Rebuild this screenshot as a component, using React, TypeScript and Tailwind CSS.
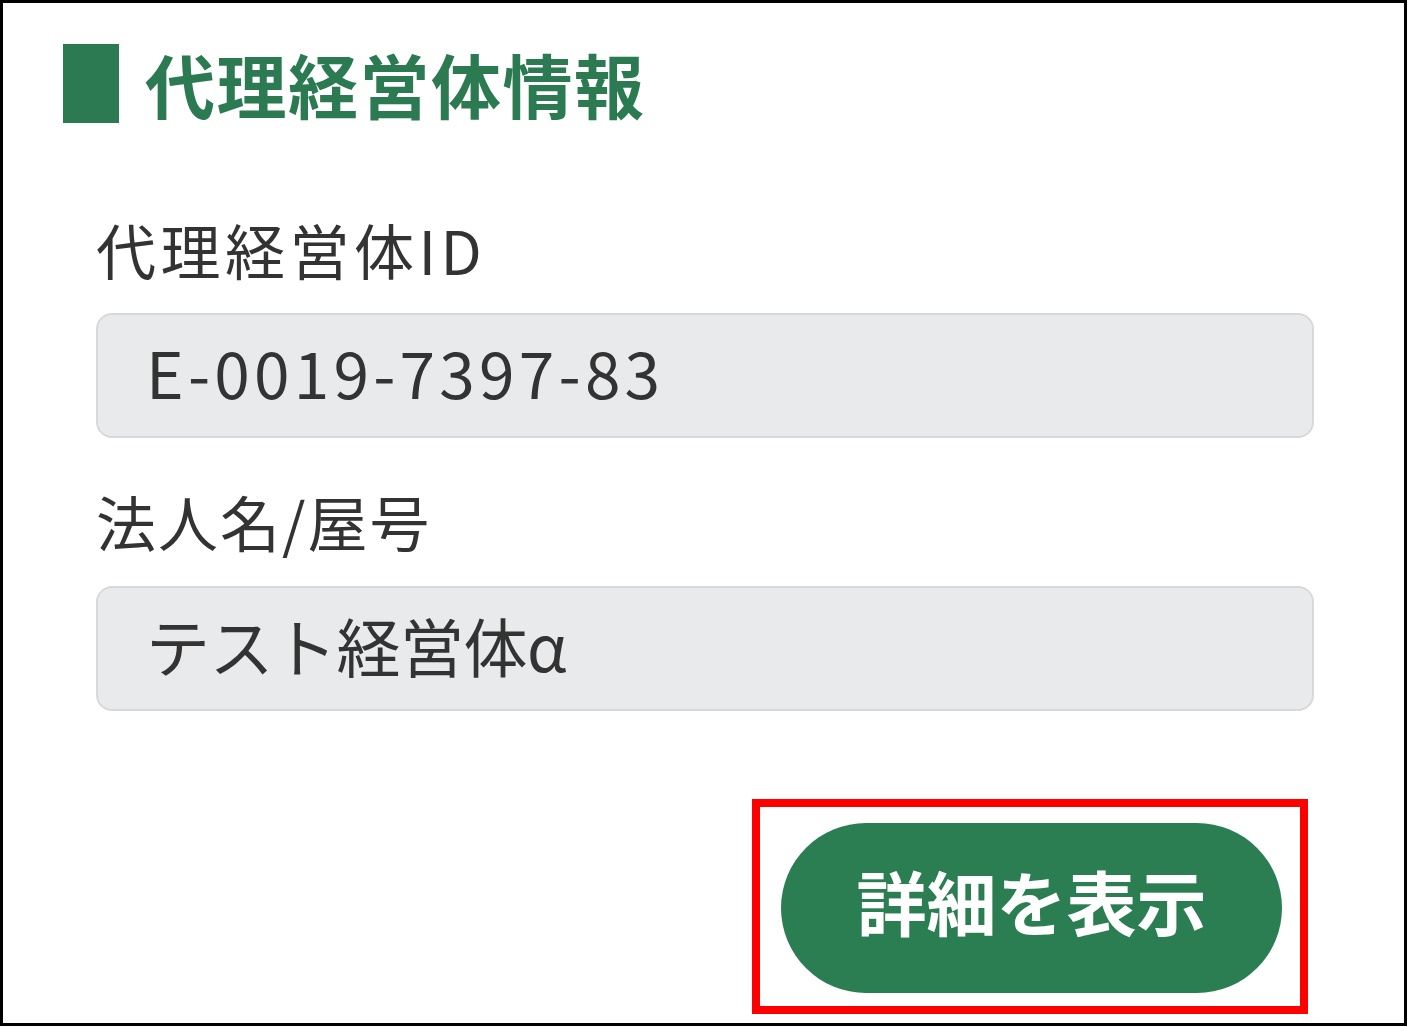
import React from "react";

const font = { fontFamily: '"Noto Sans CJK JP", "Noto Sans", sans-serif' };

export default function App() {
  return (
    <div className="w-[1408px] h-[1027px] bg-white" style={font}>
      <div className="w-[1407px] h-[1026px] border-[3px] border-black flex flex-col pl-[60px]">
        {/* 見出し */}
        <div className="flex items-center mt-[41px] gap-[26px]">
          <div className="w-[56px] h-[79px] bg-[#2b7a51]" />
          <h1 className="text-[70px] font-bold leading-none text-[#2b7a51] tracking-[1.5px]">代理経営体情報</h1>
        </div>

        <div className="pl-[33px] flex flex-col">
          <label className="mt-[96px] text-[60px] leading-none text-[#333] tracking-[4.5px]">代理経営体ID</label>
          <div className="mt-[34px] w-[1218px] h-[125px] rounded-[16px] bg-[#e9eaec] border-2 border-[#d8d9db] flex items-center pl-[48px] pb-[10px] text-[64px] text-[#333] leading-none tracking-[4.2px]">
            E-0019-7397-83
          </div>

          <label className="mt-[53px] text-[60px] leading-none text-[#333] tracking-[2px]">法人名/屋号</label>
          <div className="mt-[35px] w-[1218px] h-[125px] rounded-[16px] bg-[#e9eaec] border-2 border-[#d8d9db] flex items-center pl-[48px] pb-[10px] text-[64px] text-[#333] leading-none tracking-[-0.5px]">
            テスト経営体α
          </div>
        </div>

        <div className="flex justify-end pr-[96px] mt-[88px]">
          <div className="border-[8px] border-[#ff0000] pt-[16px] pb-[13px] pl-[21px] pr-[18px]">
            <button className="w-[501px] h-[170px] rounded-full bg-[#2b7d52] text-white font-bold text-[70px] leading-none pb-[14px]">
              詳細を表示
            </button>
          </div>
        </div>
      </div>
    </div>
  );
}
